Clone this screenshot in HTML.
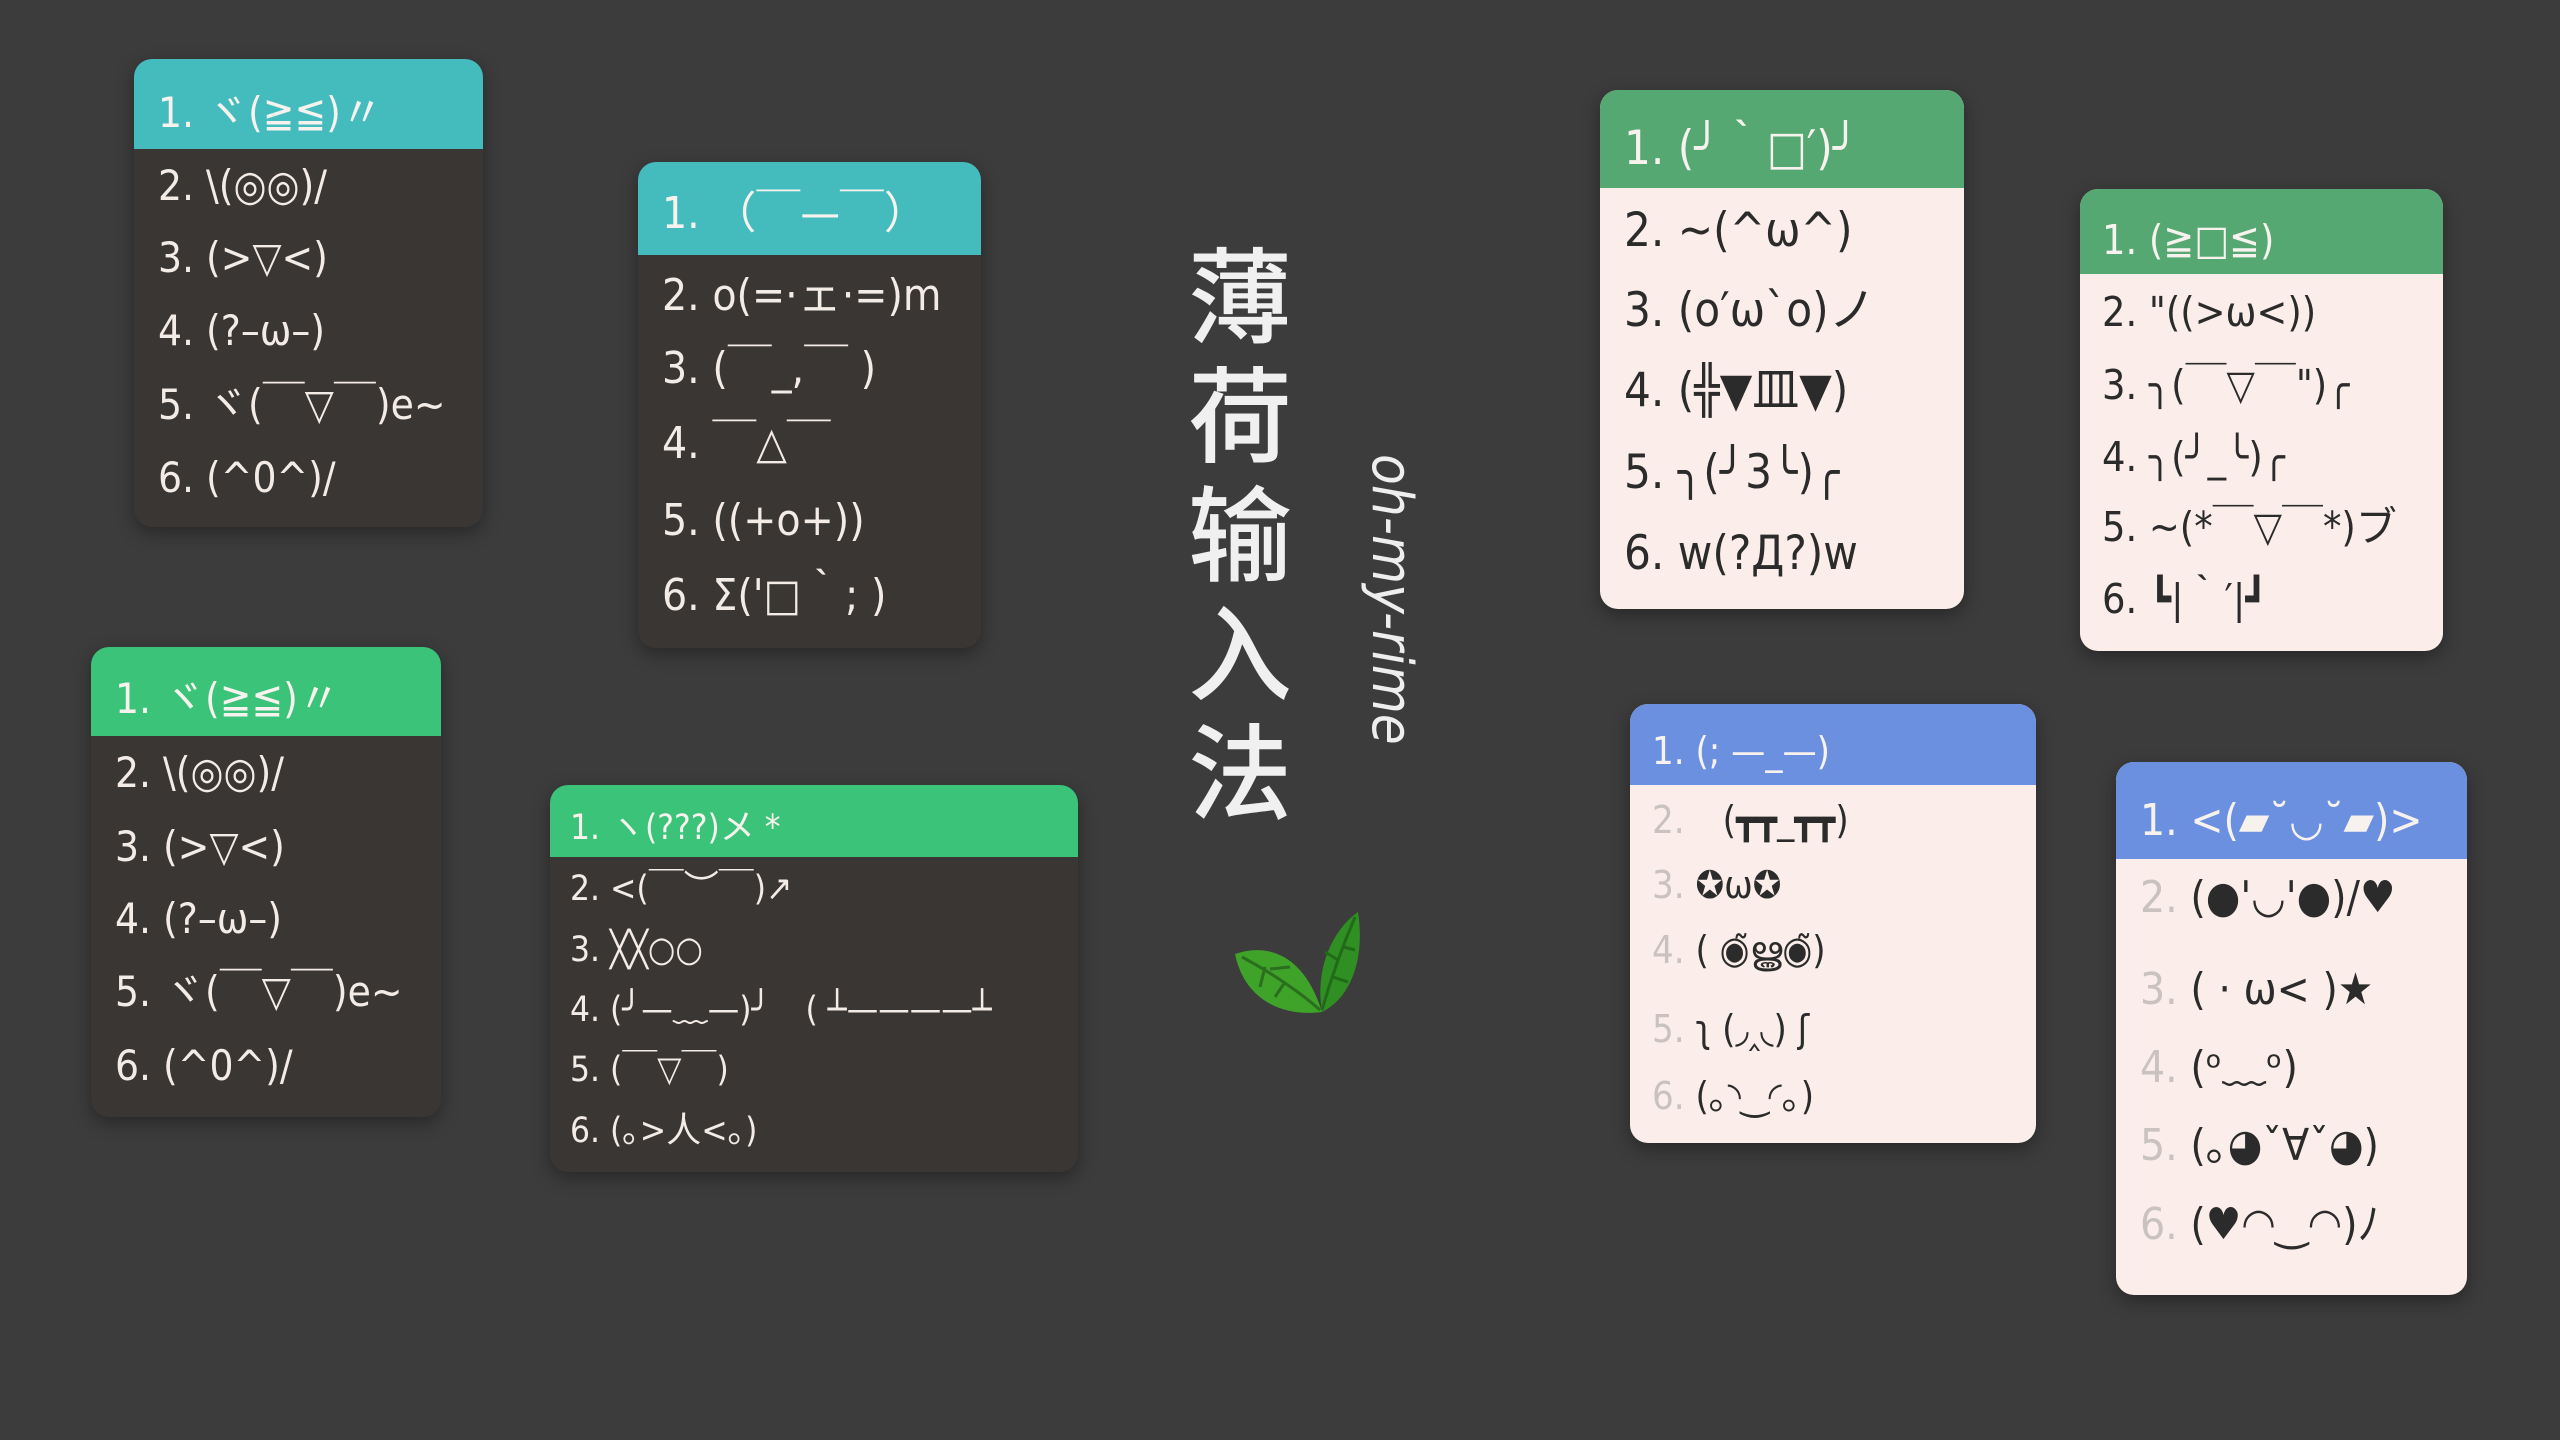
<!DOCTYPE html>
<html><head><meta charset="utf-8"><style>
*{margin:0;padding:0;box-sizing:border-box}
body{width:2560px;height:1440px;background:#3c3c3c;overflow:hidden;position:relative;font-family:"DejaVu Sans Condensed","Liberation Sans","Noto Sans CJK SC",sans-serif}
.p{position:absolute;border-radius:18px;overflow:hidden;box-shadow:0 6px 18px rgba(0,0,0,.35)}
.d{background:#3a3634;color:#f3ebe6}
.l{background:#fbeeea;color:#2b2b2b}
.h{position:absolute;left:0;right:0;top:0}
.r{position:absolute;left:0;white-space:nowrap;overflow:visible}
.r *{line-height:inherit}
.hl{color:#f7f2ee}
.g{color:#c9c2be}
.title{position:absolute;left:1188px;top:230px;width:104px;font-family:"Noto Sans CJK SC",sans-serif;font-size:104px;line-height:119px;color:#f0f0f0;font-weight:500;text-align:center}
.sub{position:absolute;left:1255px;top:560px;width:272px;height:60px;transform:rotate(90deg);transform-origin:center;font-family:"Liberation Sans Narrow","DejaVu Sans Condensed",sans-serif;font-size:56px;line-height:60px;color:#eee;font-style:italic;text-align:center;white-space:nowrap}
</style></head><body>

<div class="p d" style="left:134px;top:59px;width:349px;height:468px;font-size:42px;line-height:52px">
<div class="h" style="height:90px;background:#44bcbe"></div>
<div class="r hl" style="top:28px;left:24px">1. ヾ(≧≦)〃</div>
<div class="r" style="top:101px;left:24px">2. \(◎◎)/</div>
<div class="r" style="top:173px;left:24px">3. (&gt;▽&lt;)</div>
<div class="r" style="top:246px;left:24px">4. (?–ω–)</div>
<div class="r" style="top:320px;left:24px">5. ヾ(￣▽￣)e~</div>
<div class="r" style="top:393px;left:24px">6. (^0^)/</div>
</div>

<div class="p d" style="left:638px;top:162px;width:343px;height:486px;font-size:44px;line-height:52px">
<div class="h" style="height:93px;background:#44bcbe"></div>
<div class="r hl" style="top:26px;left:24px">1. （￣—￣）</div>
<div class="r" style="top:108px;left:24px">2. o(=·ェ·=)m</div>
<div class="r" style="top:181px;left:24px">3. (￣_,￣ )</div>
<div class="r" style="top:256px;left:24px">4. ￣△￣</div>
<div class="r" style="top:333px;left:24px">5. ((+o+))</div>
<div class="r" style="top:408px;left:24px">6. Σ('□｀; )</div>
</div>

<div class="p d" style="left:91px;top:647px;width:350px;height:470px;font-size:42px;line-height:54px">
<div class="h" style="height:89px;background:#3cc37a"></div>
<div class="r hl" style="top:25px;left:24px">1. ヾ(≧≦)〃</div>
<div class="r" style="top:99px;left:24px">2. \(◎◎)/</div>
<div class="r" style="top:173px;left:24px">3. (&gt;▽&lt;)</div>
<div class="r" style="top:245px;left:24px">4. (?–ω–)</div>
<div class="r" style="top:318px;left:24px">5. ヾ(￣▽￣)e~</div>
<div class="r" style="top:392px;left:24px">6. (^0^)/</div>
</div>

<div class="p d" style="left:550px;top:785px;width:528px;height:387px;font-size:35px;line-height:46px">
<div class="h" style="height:72px;background:#3cc37a"></div>
<div class="r hl" style="top:20px;left:20px">1. ヽ(???)メ *</div>
<div class="r" style="top:81px;left:20px">2. &lt;(￣︶￣)↗</div>
<div class="r" style="top:142px;left:20px">3. ╳╳○○</div>
<div class="r" style="top:202px;left:20px">4. (╯—﹏—)╯　( ┴————┴</div>
<div class="r" style="top:262px;left:20px">5. (￣▽￣)</div>
<div class="r" style="top:323px;left:20px">6. (｡&gt;人&lt;｡)</div>
</div>

<div class="p l" style="left:1600px;top:90px;width:364px;height:519px;font-size:47px;line-height:62px">
<div class="h" style="height:98px;background:#55a872"></div>
<div class="r hl" style="top:28px;left:24px">1. (╯｀□′)╯</div>
<div class="r" style="top:110px;left:24px">2. ~(^ω^)</div>
<div class="r" style="top:190px;left:24px">3. (o′ω`o)ノ</div>
<div class="r" style="top:270px;left:24px">4. (╬▼皿▼)</div>
<div class="r" style="top:352px;left:24px">5. ╮(╯3╰)╭</div>
<div class="r" style="top:433px;left:24px">6. w(?Д?)w</div>
</div>

<div class="p l" style="left:2080px;top:189px;width:363px;height:462px;font-size:41px;line-height:52px">
<div class="h" style="height:85px;background:#55a872"></div>
<div class="r hl" style="top:25px;left:22px">1. (≧□≦)</div>
<div class="r" style="top:97px;left:22px">2. "((&gt;ω&lt;))</div>
<div class="r" style="top:170px;left:22px">3. ╮(￣▽￣")╭</div>
<div class="r" style="top:242px;left:22px">4. ╮(╯_╰)╭</div>
<div class="r" style="top:312px;left:22px">5. ~(*￣▽￣*)ブ</div>
<div class="r" style="top:384px;left:22px">6. ┗|｀′|┛</div>
</div>

<div class="p l" style="left:1630px;top:704px;width:406px;height:439px;font-size:38px;line-height:46px">
<div class="h" style="height:81px;background:#6b90e0"></div>
<div class="r hl" style="top:24px;left:22px">1. (; —_—)</div>
<div class="r" style="top:93px;left:22px"><span class="g">2.</span>　(┳┳_┳┳)</div>
<div class="r" style="top:158px;left:22px"><span class="g">3.</span> ✪ω✪</div>
<div class="r" style="top:223px;left:22px"><span class="g">4.</span> ( ◉̃ൠ◉̃)</div>
<div class="r" style="top:302px;left:22px"><span class="g">5.</span> ʅ (◞‸◟) ʃ</div>
<div class="r" style="top:369px;left:22px"><span class="g">6.</span> (｡◝‿◜｡)</div>
</div>

<div class="p l" style="left:2116px;top:762px;width:351px;height:533px;font-size:44px;line-height:54px">
<div class="h" style="height:97px;background:#6b90e0"></div>
<div class="r hl" style="top:32px;left:24px">1. &lt;(▰˘◡˘▰)&gt;</div>
<div class="r" style="top:109px;left:24px"><span class="g">2.</span> (●'◡'●)/♥</div>
<div class="r" style="top:201px;left:24px"><span class="g">3.</span> ( · ω&lt; )★</div>
<div class="r" style="top:279px;left:24px"><span class="g">4.</span> (ᵒ﹏ᵒ)</div>
<div class="r" style="top:357px;left:24px"><span class="g">5.</span> (｡◕ˇ∀ˇ◕)</div>
<div class="r" style="top:436px;left:24px"><span class="g">6.</span> (♥◠‿◠)ﾉ</div>
</div>

<div class="title">薄<br>荷<br>输<br>入<br>法</div>
<div class="sub">oh-my-rime</div>

<svg style="position:absolute;left:1230px;top:912px" width="130" height="115" viewBox="0 0 130 115">
<path d="M5 42 C40 30 75 45 92 100 C55 105 15 90 5 42Z" fill="#3fa32a"/>
<path d="M92 100 C85 60 100 20 128 0 C135 45 122 85 92 100Z" fill="#2f8f22"/>
<path d="M12 45 C40 60 70 80 90 98 M35 55 L30 75 M55 70 L45 85 M40 57 L60 55" stroke="#2a6e1e" stroke-width="3" fill="none"/>
<path d="M92 98 C100 70 110 40 125 5 M103 65 L118 70 M108 48 L95 40 M114 35 L125 38" stroke="#216b18" stroke-width="3" fill="none"/>
</svg>
</body></html>
